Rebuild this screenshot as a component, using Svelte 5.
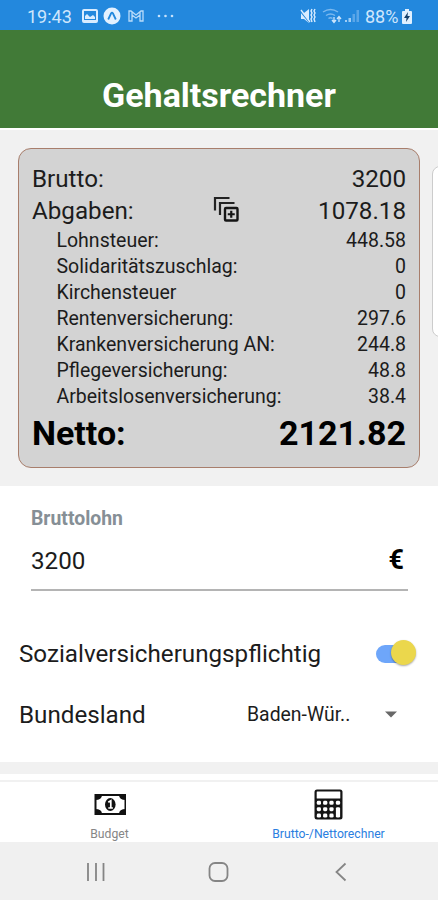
<script lang="ts">
    let grossWage = '3200';
    let insured = true;

    const deductions = [
        { label: 'Lohnsteuer:', value: '448.58' },
        { label: 'Solidaritätszuschlag:', value: '0' },
        { label: 'Kirchensteuer', value: '0' },
        { label: 'Rentenversicherung:', value: '297.6' },
        { label: 'Krankenversicherung AN:', value: '244.8' },
        { label: 'Pflegeversicherung:', value: '48.8' },
        { label: 'Arbeitslosenversicherung:', value: '38.4' }
    ];
</script>

<div class="app">
    <div class="status-bar">
        <span class="time">19:43</span>
        <svg class="picture" width="16" height="14" viewBox="0 0 16 14">
            <path fill="#d9ecff" fill-rule="evenodd" d="M2 0h12q2 0 2 2v10q0 2-2 2H2q-2 0-2-2V2q0-2 2-2zM2 2v9h12V2z" />
            <path fill="#d9ecff" d="M3 10V7l2-2 3 3 3-2 2 2v2z" />
        </svg>
        <svg class="expo" width="18" height="18" viewBox="0 0 18 18">
            <circle cx="9" cy="9" r="8.5" fill="#e3f1ff" />
            <path d="M5.2 12.5 8 6.5q1-1.6 2 0l2.8 6" fill="none" stroke="#2388dd" stroke-width="1.8" />
        </svg>
        <svg class="mail" width="16" height="14" viewBox="0 0 16 14">
            <path d="M1 2v10h3V6l4 3 4-3v6h3V2h-2L8 6 3 2zM4 6V3m8 3V3" fill="none" stroke="#b9dbfa" stroke-width="1.3" />
        </svg>
        <svg class="more" width="17" height="4" viewBox="0 0 17 4">
            <g fill="#c5e1fb"><circle cx="2" cy="2" r="1.3" /><circle cx="8.5" cy="2" r="1.3" /><circle cx="15" cy="2" r="1.3" /></g>
        </svg>
        <span class="spacer"></span>
        <svg class="mute" width="16" height="16" viewBox="0 0 16 16">
            <path fill="#d9ecff" d="M1 5h3l5-4v14l-5-4H1z" />
            <path d="m0 3 10 12" stroke="#2388dd" stroke-width="1.2" />
            <path d="m1 2 9 12M12 1l-1 2 1 2-1 2 1 2-1 2 1 3M15 1l-1 2 1 2-1 2 1 2-1 2 1 3" fill="none" stroke="#d9ecff" stroke-width="1.4" />
        </svg>
        <svg class="wifi" width="20" height="16" viewBox="0 0 20 16">
            <path d="M1 4q7.500-5 15 0M4 7.500q4.500-3 9 0M6.500 10.500q2-1.500 4 0" fill="none" stroke="#7cb9ef" stroke-width="1.5" />
            <path d="M12 9v5m-2-2 2 2.500 2-2.500M17 14V9m-2 2 2-2.500 2 2.500" fill="none" stroke="#cce5fc" stroke-width="1.3" />
        </svg>
        <svg class="signal" width="14" height="14" viewBox="0 0 14 14">
            <path fill="#9fcdf6" d="M0 11h2v2H0zM3.500 9h2.500v4H3.500z" />
            <path fill="#5ba6e8" d="M7.500 5H10v8H7.500zM11.500 1H14v12h-2.500z" />
        </svg>
        <span class="battery-level">88%</span>
        <svg class="battery" width="10" height="15" viewBox="0 0 10 15">
            <path fill="#e0f0ff" d="M3 0h4v2h2q1 0 1 1v11q0 1-1 1H1q-1 0-1-1V3q0-1 1-1h2z" />
            <path fill="#143f6b" d="M6 3 2 9h2.500L4 13l4-6H5.500z" />
        </svg>
    </div>

    <header>
        <h1>Gehaltsrechner</h1>
    </header>

    <section class="summary">
        <div class="card">
            <div class="row total">
                <span>Brutto:</span>
                <span>3200</span>
            </div>
            <div class="row total">
                <span>Abgaben:</span>
                <svg class="expand" width="26" height="26" viewBox="0 0 26 26">
                    <path d="M2 14.500V2h14.500M7 19V7h14.500" fill="none" stroke="#222" stroke-width="2.200" />
                    <rect x="12" y="12" width="12.500" height="12.500" rx="1" fill="none" stroke="#151515" stroke-width="2.400" />
                    <path d="M18.250 14.800v7M14.750 18.250h7" stroke="#151515" stroke-width="2.200" />
                </svg>
                <span>1078.18</span>
            </div>
            {#each deductions as item}
                <div class="row deduction">
                    <span>{item.label}</span>
                    <span>{item.value}</span>
                </div>
            {/each}
            <div class="row net">
                <span>Netto:</span>
                <span>2121.82</span>
            </div>
        </div>
        <div class="edge-panel"></div>
    </section>

    <section class="form">
        <label class="field">
            <span class="field-label">Bruttolohn</span>
            <span class="field-line">
                <input bind:value={grossWage} />
                <span class="euro">€</span>
            </span>
        </label>
        <div class="option insured">
            <span>Sozialversicherungspflichtig</span>
            <button class="switch" class:on={insured} aria-label="Sozialversicherungspflichtig" on:click={() => (insured = !insured)}>
                <span class="thumb"></span>
            </button>
        </div>
        <div class="option state">
            <span>Bundesland</span>
            <span class="picker">
                Baden-Wür..
                <svg width="12" height="7" viewBox="0 0 12 7"><path fill="#686868" d="M0 .5h12l-6 6z" /></svg>
            </span>
        </div>
    </section>

    <div class="next-section"></div>

    <nav class="tabs">
        <div class="tab">
            <svg width="32" height="32" viewBox="0 0 32 32">
                <rect x="1.500" y="7" width="30" height="19" fill="#fff" stroke="#111" stroke-width="2" />
                <path fill="#111" d="M1 7h7q0 5-7 5zM32 7h-7q0 5 7 5zM1 26h7q0-5-7-5zM32 26h-7q0-5 7-5z" />
                <ellipse cx="16.300" cy="16.500" rx="5.300" ry="6.500" fill="#111" />
                <path d="m14.300 14.200 2.500-1.500v7M14.300 20h4.600" fill="none" stroke="#fff" stroke-width="1.700" />
            </svg>
            <span>Budget</span>
        </div>
        <div class="tab active">
            <svg width="32" height="32" viewBox="0 0 32 32">
                <rect x="1.500" y="1.500" width="28" height="30" rx="2.500" fill="#151515" />
                <rect x="3.700" y="3.500" width="23.600" height="7" rx=".5" fill="#fff" />
                <g fill="#fff">
                    {#each [14.8, 21.2, 27.6] as y}
                        {#each [5.9, 12.2, 18.500] as x}
                            <rect x={x - 2.1} y={y - 2} width="4.200" height="4" rx="1.400" />
                        {/each}
                    {/each}
                    <rect x="22.900" y="12.800" width="4.200" height="4" rx="1.400" />
                    <rect x="22.900" y="19.200" width="4.200" height="10.400" rx="1.400" />
                </g>
            </svg>
            <span>Brutto-/Nettorechner</span>
        </div>
    </nav>

    <div class="system-nav">
        <svg width="20" height="20" viewBox="0 0 20 20">
            <path d="M2 1v18M10 1v18M17.500 1v18" stroke="#858585" stroke-width="1.800" />
        </svg>
        <svg width="22" height="22" viewBox="0 0 22 22">
            <rect x="1.500" y="2" width="18" height="18" rx="5.500" fill="none" stroke="#858585" stroke-width="1.800" />
        </svg>
        <svg width="20" height="20" viewBox="0 0 20 20">
            <path d="m14.500 1.500-9 8.500 9 8.500" fill="none" stroke="#858585" stroke-width="1.800" />
        </svg>
    </div>
</div>

<style>
    :global(body) {
        margin: 0;
    }

    .app {
        display: flex;
        flex-direction: column;
        height: 900px;
        overflow: hidden;
        background-color: #fff;
        color: #1c1c1c;
        font-family: Roboto, sans-serif;
        font-size: 24.2px;
    }

    .app * {
        box-sizing: border-box;
    }

    svg {
        display: block;
        flex-shrink: 0;
    }

    .status-bar {
        display: flex;
        align-items: center;
        height: 30px;
        padding: 2px 26px 0 27px;
        background-color: #2388dd;
        color: #cfe6fc;
        font-size: 18px;
    }

    .time {
        width: 55px;
    }

    .expo {
        margin-left: 5px;
    }

    .mail {
        margin-left: 7px;
    }

    .more {
        margin-left: 13px;
    }

    .spacer {
        flex: 1;
    }

    .wifi {
        margin-left: 6px;
    }

    .signal {
        margin: 0 6px 0 3px;
    }

    .battery-level {
        width: 37px;
    }

    header {
        display: flex;
        justify-content: center;
        height: 98px;
        padding-top: 45px;
        background-color: #417a37;
        color: #fff;
    }

    h1 {
        margin: 0;
        font-size: 34px;
        line-height: 40px;
        font-weight: 700;
    }

    .summary {
        position: relative;
        height: 358px;
        padding: 18px;
        border-top: 2px solid #fff;
        background-color: #f1f1f1;
    }

    .card {
        height: 320px;
        padding: 14px 13px 0;
        border: 1px solid #a87e6c;
        border-radius: 13px;
        background-color: #d3d3d3;
    }

    .row {
        display: flex;
        justify-content: space-between;
    }

    .total {
        height: 32.3px;
        line-height: 32.3px;
    }

    .expand {
        margin: 1px -1px 0 0;
    }

    .deduction {
        height: 26.15px;
        padding-left: 24.5px;
        font-size: 19.5px;
        line-height: 26.5px;
    }

    .net {
        color: #000;
        font-size: 34px;
        font-weight: 700;
        line-height: 44px;
    }

    .edge-panel {
        position: absolute;
        top: 36px;
        right: -10px;
        width: 16px;
        height: 171px;
        border: 1px solid #ccc;
        border-radius: 8px;
        background-color: #fff;
    }

    .form {
        height: 276px;
        padding: 20px 18px 0 19px;
    }

    .field {
        display: block;
        height: 85px;
        margin: 0 12px;
        border-bottom: 2px solid #b4b4b4;
    }

    .field-label {
        display: block;
        color: #868f96;
        font-size: 19.4px;
        font-weight: 700;
        line-height: 26px;
    }

    .field-line {
        display: flex;
        justify-content: space-between;
        align-items: center;
        height: 58px;
    }

    input {
        width: 200px;
        padding: 0;
        border: 0;
        outline: none;
        background: none;
        color: inherit;
        font: inherit;
    }

    .euro {
        margin: -3px 4px 0 0;
        color: #000;
        font-size: 27px;
        font-weight: 700;
    }

    .option {
        display: flex;
        justify-content: space-between;
        align-items: center;
    }

    .insured {
        height: 60px;
        margin-top: 33px;
    }

    .state {
        height: 61px;
    }

    .switch {
        width: 36px;
        height: 18px;
        margin-right: 8px;
        padding: 0;
        border: 0;
        border-radius: 9px;
        background-color: #bbb;
    }

    .switch.on {
        background-color: #6ea6fa;
    }

    .thumb {
        display: block;
        width: 25px;
        height: 25px;
        margin: -5px 0 0 -3px;
        border-radius: 50%;
        background-color: #ebd74c;
        box-shadow: 0 1px 2px rgba(0, 0, 0, 0.35);
    }

    .on .thumb {
        margin-left: 15px;
    }

    .picker {
        display: flex;
        justify-content: space-between;
        align-items: center;
        width: 150px;
        margin-right: 23px;
        font-size: 19.4px;
    }

    .next-section {
        height: 20px;
        border-top: 12px solid #f1f1f1;
        border-bottom: 2px solid #f1f1f1;
    }

    .tabs {
        display: flex;
        height: 60px;
    }

    .tab {
        display: flex;
        flex: 1;
        flex-direction: column;
        align-items: center;
        padding-top: 6px;
        color: #868686;
        font-size: 12.2px;
        line-height: 29px;
    }

    .tab.active {
        color: #2a7ee0;
    }

    .system-nav {
        display: flex;
        justify-content: space-between;
        align-items: center;
        height: 58px;
        padding: 2px 87px 0 86px;
        background-color: #f0f0f0;
    }
</style>
